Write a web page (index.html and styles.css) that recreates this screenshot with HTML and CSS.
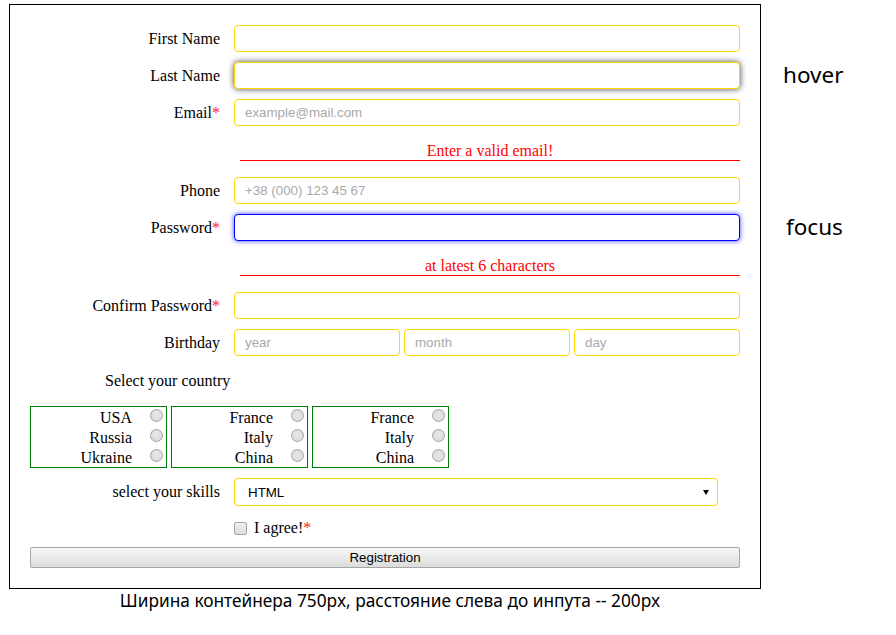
FILE: index.html
```html
<!DOCTYPE html>
<html lang="en">
<head>
<meta charset="utf-8">
<title>Registration</title>
<link rel="stylesheet" href="styles.css">
</head>
<body>
<div class="page">
  <form class="form">
    <div class="row">
      <label class="label">First Name</label>
      <input class="field" type="text">
    </div>
    <div class="row">
      <label class="label">Last Name</label>
      <input class="field is-hover" type="text">
    </div>
    <div class="row">
      <label class="label">Email<span class="req">*</span></label>
      <input class="field" type="text" placeholder="example@mail.com">
    </div>
    <div class="error">Enter a valid email!</div>
    <div class="row">
      <label class="label">Phone</label>
      <input class="field" type="text" placeholder="+38 (000) 123 45 67">
    </div>
    <div class="row">
      <label class="label">Password<span class="req">*</span></label>
      <input class="field is-focus" type="password">
    </div>
    <div class="error">at latest 6 characters</div>
    <div class="row">
      <label class="label">Confirm Password<span class="req">*</span></label>
      <input class="field" type="password">
    </div>
    <div class="row">
      <label class="label">Birthday</label>
      <div class="dates">
        <input class="field" type="text" placeholder="year">
        <input class="field" type="text" placeholder="month">
        <input class="field" type="text" placeholder="day">
      </div>
    </div>
    <div class="country-title">Select your country</div>
    <div class="countries">
      <div class="cbox">
        <label class="opt">USA<input class="radio" type="radio" name="c1"></label>
        <label class="opt">Russia<input class="radio" type="radio" name="c1"></label>
        <label class="opt">Ukraine<input class="radio" type="radio" name="c1"></label>
      </div>
      <div class="cbox">
        <label class="opt">France<input class="radio" type="radio" name="c2"></label>
        <label class="opt">Italy<input class="radio" type="radio" name="c2"></label>
        <label class="opt">China<input class="radio" type="radio" name="c2"></label>
      </div>
      <div class="cbox">
        <label class="opt">France<input class="radio" type="radio" name="c3"></label>
        <label class="opt">Italy<input class="radio" type="radio" name="c3"></label>
        <label class="opt">China<input class="radio" type="radio" name="c3"></label>
      </div>
    </div>
    <div class="row row-select">
      <label class="label">select your skills</label>
      <div class="select-wrap">
        <select class="select">
          <option>HTML</option>
          <option>CSS</option>
          <option>JavaScript</option>
        </select>
        <span class="arrow"></span>
      </div>
    </div>
    <div class="agree">
      <input class="check" type="checkbox" id="agree"><label for="agree">I agree!<span class="req">*</span></label>
    </div>
    <button class="btn" type="button">Registration</button>
  </form>
  <div class="caption">Ширина контейнера 750px, расстояние слева до инпута -- 200px</div>
  <div class="note note-hover">hover</div>
  <div class="note note-focus">focus</div>
</div>
</body>
</html>
```
FILE: styles.css
```css
html, body {
  margin: 0;
  padding: 0;
  background: #fff;
}
body {
  font-family: "Liberation Serif", "Times New Roman", serif;
  font-size: 16px;
  color: #000;
}
.page {
  position: relative;
  padding: 4px 0 0 9px;
  width: 887px;
  height: 631px;
}
.form {
  box-sizing: border-box;
  width: 752px;
  border: 1px solid #000;
  padding: 20px 20px 20px 20px;
  margin: 0;
}
.row {
  display: flex;
  align-items: center;
  margin-bottom: 10px;
}
.label {
  width: 190px;
  flex: none;
  text-align: right;
  margin-right: 14px;
  line-height: 18px;
}
.req {
  color: #ff1a1a;
}
.field {
  box-sizing: border-box;
  flex: 1 1 0;
  width: 0;
  min-width: 0;
  height: 27px;
  border: 1px solid #ffd700;
  border-radius: 4px;
  padding: 5px 10px;
  font-family: "Liberation Sans", Arial, sans-serif;
  font-size: 13.33px;
  color: #000;
  background: #fff;
  outline: none;
  margin: 0;
}
.field::placeholder {
  color: #a9a9a9;
}
.field.is-hover {
  box-shadow: 0 0 6px rgba(0, 0, 0, 0.75);
}
.field.is-focus {
  border-color: #0000ff;
  box-shadow: 0 0 5px rgba(0, 0, 255, 0.75);
}
.dates {
  flex: none;
  width: 506px;
  display: flex;
  gap: 4px;
}
.error {
  margin: 16px 0 16px 210px;
  line-height: 18px;
  text-align: center;
  color: #ff0000;
  border-bottom: 1px solid #ff0000;
}
.country-title {
  margin: 16px 0 16px 75px;
  line-height: 18px;
}
.countries {
  display: flex;
  gap: 4px;
  margin-bottom: 10px;
}
.cbox {
  box-sizing: border-box;
  width: 137px;
  border: 1px solid #008000;
  display: flex;
  flex-direction: column;
}
.opt {
  height: 20px;
  display: flex;
  align-items: center;
  justify-content: flex-end;
  line-height: 18px;
  padding-top: 1px;
  box-sizing: border-box;
}
.radio {
  appearance: none;
  -webkit-appearance: none;
  box-sizing: border-box;
  width: 13px;
  height: 13px;
  margin: -5px 3px 0 18px;
  border: 1px solid #a4a4a4;
  border-radius: 50%;
  background: radial-gradient(circle at 50% 40%, #e8e8e8 0%, #d6d6d6 100%);
}
.row-select {
  margin-bottom: 13px;
}
.select-wrap {
  position: relative;
  width: 484px;
  height: 28px;
}
.select {
  appearance: none;
  -webkit-appearance: none;
  box-sizing: border-box;
  width: 100%;
  height: 28px;
  border: 1px solid #ffd700;
  border-radius: 4px;
  padding: 0 13px;
  font-family: "Liberation Sans", Arial, sans-serif;
  font-size: 13.33px;
  color: #000;
  background: #fff;
  outline: none;
  margin: 0;
}
.arrow {
  position: absolute;
  right: 9px;
  top: 12px;
  width: 0;
  height: 0;
  border-left: 3px solid transparent;
  border-right: 3px solid transparent;
  border-top: 5px solid #000;
  pointer-events: none;
}
.agree {
  display: flex;
  align-items: center;
  padding-left: 204px;
  height: 18px;
  line-height: 18px;
  margin-bottom: 10px;
}
.check {
  appearance: none;
  -webkit-appearance: none;
  box-sizing: border-box;
  width: 13px;
  height: 13px;
  margin: 0 7px 0 0;
  border: 1px solid #a4a4a4;
  border-radius: 2px;
  background: linear-gradient(#f0f0f0, #dcdcdc);
}
.btn {
  display: block;
  box-sizing: border-box;
  width: 100%;
  height: 21px;
  margin: 0;
  padding: 0;
  border: 1px solid #a6a6a6;
  border-radius: 2px;
  background: linear-gradient(#f7f7f7, #dcdcdc);
  font-family: "Liberation Sans", Arial, sans-serif;
  font-size: 13.33px;
  color: #000;
}
.caption {
  width: 752px;
  padding-left: 10px;
  box-sizing: border-box;
  text-align: center;
  font-family: "Noto Sans", "DejaVu Sans", sans-serif;
  font-size: 17.3px;
  line-height: 23px;
}
.note {
  position: absolute;
  font-family: "Noto Sans", "DejaVu Sans", sans-serif;
  font-size: 22.5px;
  line-height: 30px;
}
.note-hover {
  left: 783px;
  top: 60px;
}
.note-focus {
  left: 786px;
  top: 212px;
}
```
